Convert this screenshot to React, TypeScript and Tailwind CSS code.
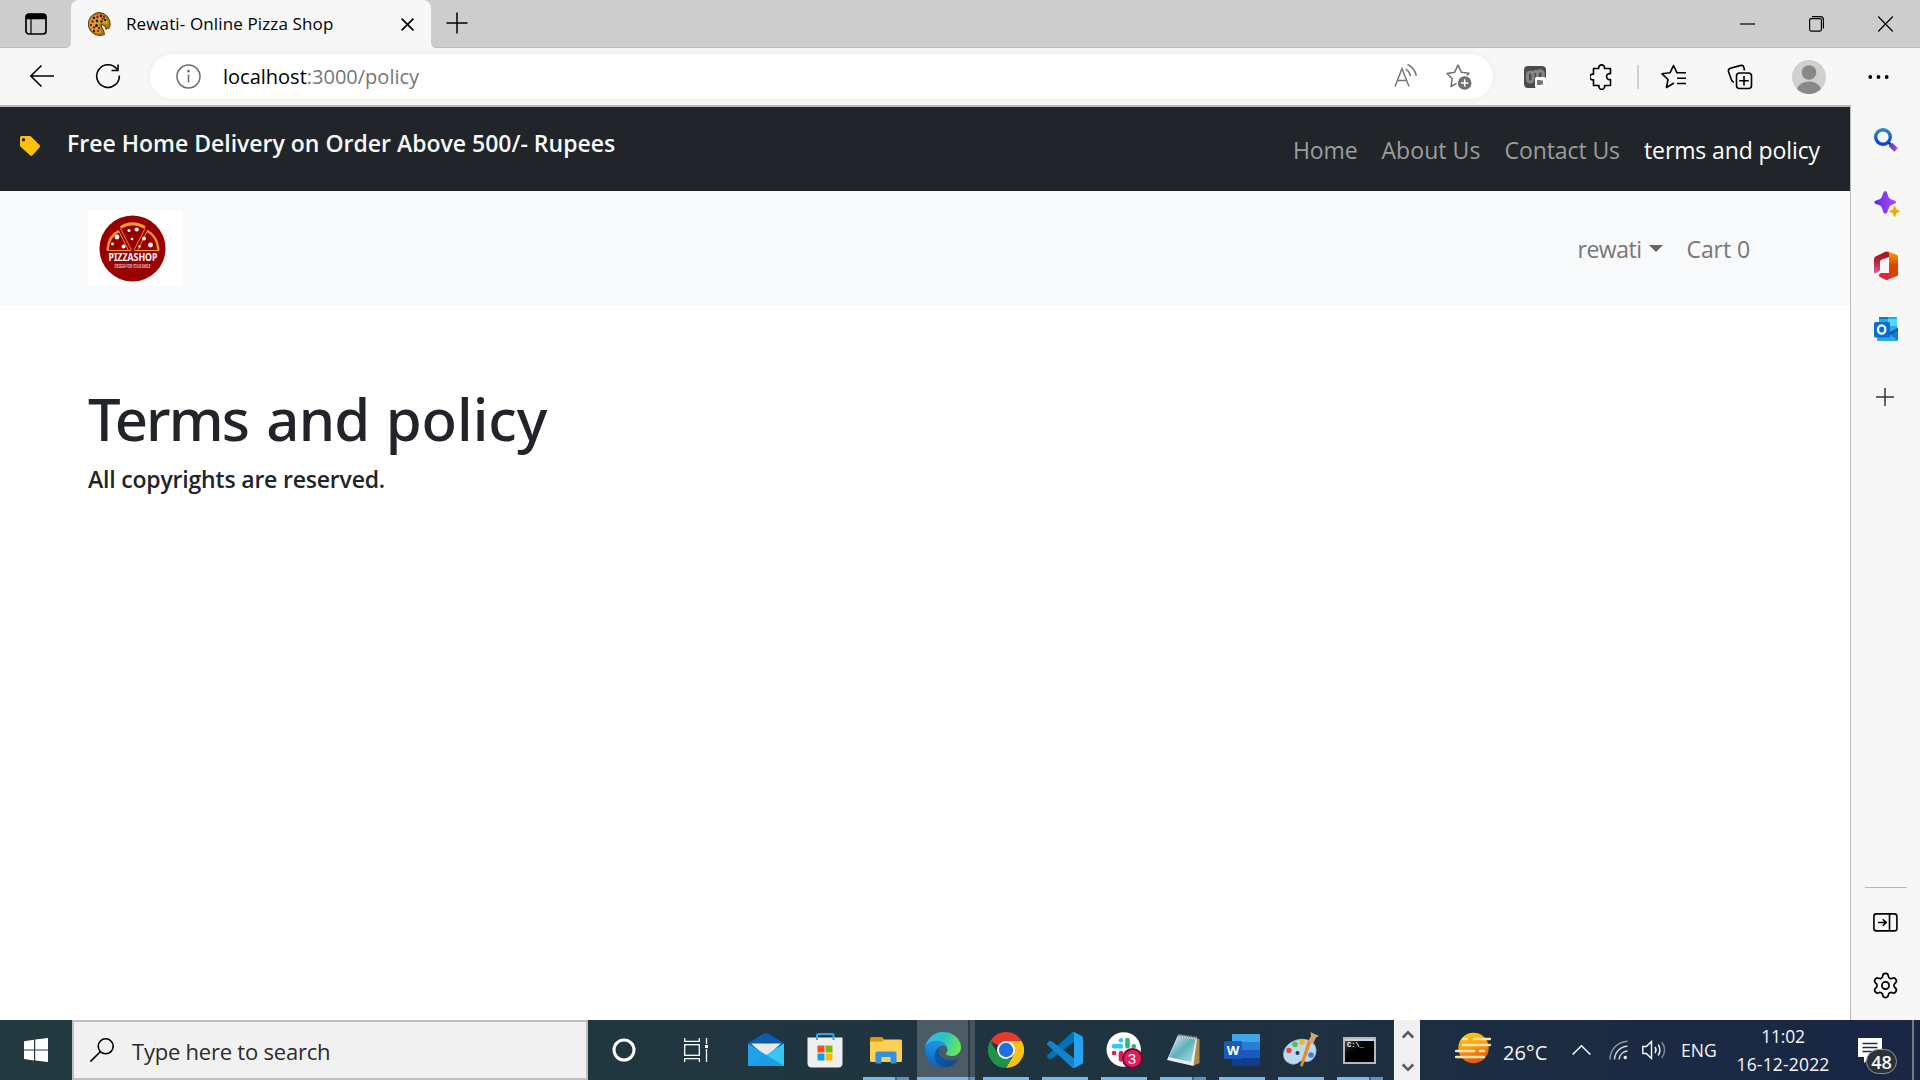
import React from "react";
import { Settings } from "lucide-react";

type Kids = { children?: React.ReactNode };

/* ---------- Browser chrome ---------- */

function Favicon() {
  return (
    <svg className="ml-4 h-6 w-6" viewBox="0 0 24 24">
      <path d="M12 0.5A11.5 11.5 0 1 0 17.5 22.500L16.500 18l-1.500-2-1-4 4 2.500 1 3 1.500-1.500 1 1 1.600-3.500A11.5 11.5 0 0 0 12 .5z" fill="#b87514" stroke="#4a2a08" strokeWidth="0.9" />
      <path d="M12 3a9 9 0 1 0 2 17.6l-1-4.6-1.500-4.500 5 0 4.500 0A9 9 0 0 0 12 3z" fill="#d9a436" />
      <g fill="#2d1b06">
        <circle cx="7" cy="6" r="1.300" /><circle cx="14" cy="4" r="1.300" /><circle cx="4" cy="13" r="1.100" />
        <circle cx="9.500" cy="13.500" r="1.500" /><circle cx="18" cy="8" r="1.300" /><circle cx="7" cy="19" r="1.200" /><circle cx="10" cy="9" r="1.400" /><circle cx="14.500" cy="9.500" r="1.200" /><circle cx="17" cy="5" r="0.900" /><circle cx="12" cy="16" r="1.100" />
      </g>
      <g fill="#b3231d">
        <circle cx="10.500" cy="5" r="1.400" /><circle cx="5.500" cy="9.500" r="1.400" /><circle cx="7" cy="15.500" r="1.400" /><circle cx="15.500" cy="6.800" r="1.200" /><circle cx="11" cy="18.800" r="1.300" />
      </g>
    </svg>
  );
}

function TabStrip() {
  return (
    <div className="flex h-12 w-full items-center bg-[#cdcdcd] shadow-[inset_0_-1px_0_#bcbcbc]">
      <svg className="ml-[25px] h-[22px] w-[22px]" viewBox="0 0 22 22" fill="none" stroke="#000" strokeWidth="1.700">
        <rect x="1" y="1" width="20" height="20" rx="3" />
        <path d="M1.500 5.500V4Q1.500 1.500 4 1.500H18Q20.500 1.500 20.500 4V5.500z" fill="#000" />
        <path d="M6 5.500V21" strokeWidth="1.200" />
      </svg>
      <svg className="ml-[18px] h-[6px] w-[6px] self-end" viewBox="0 0 6 6"><path d="M6 0V6H0Q6 6 6 0z" fill="#f7f7f7" /></svg>
      <div className="flex h-12 w-[360px] items-center rounded-t-lg bg-[#f7f7f7]">
        <Favicon />
        <span className="ml-[15px] w-[275px] whitespace-nowrap text-[17px] leading-6 tracking-[0.131px]">Rewati- Online Pizza Shop</span>
        <svg className="mt-px h-[13px] w-[13px]" viewBox="0 0 13 13" stroke="#000" strokeWidth="1.600"><path d="M.6.6 12.400 12.400M12.400.6.6 12.400" /></svg>
      </div>
      <svg className="h-[6px] w-[6px] self-end" viewBox="0 0 6 6"><path d="M0 0V6H6Q0 6 0 0z" fill="#f7f7f7" /></svg>
      <svg className="ml-[9px] h-[22px] w-[22px] -translate-y-px" viewBox="0 0 22 22" stroke="#000" strokeWidth="1.500"><path d="M11 .5V21.500M.5 11H21.500" /></svg>
      <div className="flex-1" />
      <svg className="h-4 w-[15px]" viewBox="0 0 15 16"><path d="M0 8H15" stroke="#000" strokeWidth="1.200" /></svg>
      <svg className="ml-[54px] h-4 w-[15px]" viewBox="0 0 15 16" fill="none" stroke="#000" strokeWidth="1.200">
        <rect x=".6" y="2.600" width="11.800" height="12.500" rx="1.500" />
        <path d="M3 .6H11.500Q14.400 .6 14.400 3.500V12.500" />
      </svg>
      <svg className="ml-[54px] mr-[27px] h-4 w-[15px]" viewBox="0 0 15 16" stroke="#000" strokeWidth="1.200"><path d="M.2.500 14.800 15.500M14.800.500.2 15.500" /></svg>
    </div>
  );
}

function Toolbar() {
  return (
    <div className="flex h-[57px] w-full items-center bg-[#f7f7f7]">
      <svg className="mb-[2px] ml-[29px] h-6 w-[25px]" viewBox="0 0 25 24" fill="none" stroke="#000" strokeWidth="1.600"><path d="M12.500 1.500 1.800 12 12.500 22.500M1.800 12H25" /></svg>
      <svg className="mb-px ml-[41px] h-[26px] w-[26px]" viewBox="0 0 26 26" fill="none" stroke="#000" strokeWidth="1.600">
        <path d="M22.200 6.500A11.300 11.300 0 1 0 24.300 12.500" /><path d="M23 1.500V7.500H16.500" />
      </svg>
      <div className="ml-[29px] flex h-[45px] w-[1343px] items-center rounded-full bg-white shadow-[0_0_6px_rgba(0,0,0,0.06)]">
        <svg className="ml-[26px] h-[25px] w-[25px]" viewBox="0 0 25 25" fill="none" stroke="#6b6b6b" strokeWidth="1.500">
          <circle cx="12.500" cy="12.500" r="11.500" /><path d="M12.500 10.500V18.500" /><circle cx="12.500" cy="7.200" r=".6" fill="#6b6b6b" />
        </svg>
        <div className="ml-[22px] flex-1 whitespace-nowrap text-[20px] leading-7 text-black">
          <span>localhost</span><span className="text-[#767676]">:3000/policy</span>
        </div>
        <svg className="mr-px h-[26px] w-[24px] -translate-y-px" viewBox="0 0 24 26" fill="none" stroke="#767676" strokeWidth="1.500">
          <path d="M1 23.500 8 5.500 15 23.500M3.500 17.500H12.500" />
          <path d="M11.500 5.800Q15.500 8 16.500 13.200M13.500 1.500Q20.500 4.500 22.300 12.800" />
        </svg>
        <svg className="ml-[27px] mr-[21px] h-[26px] w-[26px]" viewBox="0 0 26 26" fill="none" stroke="#6f6f6f" strokeWidth="1.500" strokeLinejoin="round">
          <path d="M10.500 19.300 5 22.500 6.200 14.800 1 9.500 8.500 8.300 12 1.200 15.500 8.300 23 9.300 21 11.500" />
          <circle cx="18.700" cy="19" r="6.800" fill="#6f6f6f" stroke="none" />
          <path d="M18.700 15.300V22.700M15 19H22.400" stroke="#fff" strokeWidth="1.600" />
        </svg>
      </div>
      <svg className="ml-[31px] h-[22px] w-[22px]" viewBox="0 0 22 22">
        <rect width="22" height="22" rx="4" fill="#4b4b4b" />
        <rect x="3.500" y="6" width="5.500" height="10" rx="2.700" fill="none" stroke="#858585" strokeWidth="3" />
        <path d="M9 6.500Q12 4 13.500 6.500V12M13.500 6Q17 3.500 19 6.500V12" fill="none" stroke="#858585" strokeWidth="3.200" />
        <rect x="11" y="11" width="11" height="11" rx="1.500" fill="#fafafa" />
        <path d="M13 14H17V15L19 14V19L17 18V19H13z" fill="#777" />
      </svg>
      <svg className="ml-[44px] h-[26px] w-[24px]" viewBox="0 0 24 26" fill="none" stroke="#000" strokeWidth="1.600" strokeLinejoin="round">
        <path d="M3.500 4.500H8.800A2.900 2.900 0 1 1 14.400 4.500H20.500V9.800A3 3 0 1 0 20.500 15.500V21.500H14.500A2.900 2.900 0 1 1 9 21.500H3.500V15.800A2.900 2.900 0 1 1 3.500 10.200z" />
      </svg>
      <div className="ml-[23px] h-6 w-[2px] bg-[#cfcfcf]" />
      <svg className="ml-[22px] h-[26px] w-[26px]" viewBox="0 0 26 26" fill="none" stroke="#000" strokeWidth="1.600" strokeLinejoin="round">
        <path d="M13 19 5.500 23.500 7 15.500 1 9.800 9 8.800 12.500 1.500 16 8.800H25M16 14.200H25M16 19.500H25" />
      </svg>
      <svg className="ml-[40px] h-[26px] w-[26px]" viewBox="0 0 26 26" fill="none" stroke="#000" strokeWidth="1.600">
        <rect x="9.500" y="9" width="15" height="15.500" rx="3" />
        <path d="M17 12V21.500M12.200 16.700H21.800" />
        <path d="M17.500 6.500 16.800 3.200Q16.200 1 14 1.400L3.300 4.200Q1 5 1.500 7.500L4.500 16Q5 17.800 7 18" />
      </svg>
      <svg className="ml-[39px] h-[34px] w-[34px]" viewBox="0 0 34 34">
        <circle cx="17" cy="17" r="17" fill="#d2d0ce" /><circle cx="17" cy="12.500" r="7.300" fill="#8a8886" />
        <path d="M5 29Q8 21.500 17 21.500T29 29A17 17 0 0 1 5 29z" fill="#8a8886" />
      </svg>
      <svg className="ml-[42px] h-1 w-[21px]" viewBox="0 0 21 4"><circle cx="2.300" cy="2" r="1.900" /><circle cx="10.500" cy="2" r="1.900" /><circle cx="18.700" cy="2" r="1.900" /></svg>
    </div>
  );
}

/* ---------- Web page ---------- */

function PizzaLogo() {
  return (
    <div className="flex h-[75px] w-[95px] items-center justify-center bg-white pr-[6px]">
      <svg className="h-[67px] w-[67px] overflow-visible" viewBox="0 0 67 67">
        <circle cx="33.500" cy="33.500" r="33" fill="#980000" />
        <g fill="none" stroke="#f2992e">
          <path d="M21.500 12.500Q33.500 5 46 12.500" strokeWidth="2.800" />
          <path d="M8.500 35Q9.500 21 20 15.800M59.500 35Q58 21 48 15.800" strokeWidth="2.400" />
          <path d="M8 35.500H32M35.500 35.500H60" strokeWidth="1.200" />
          <path d="M21.500 13.500 32.500 35M20 16.500 29.500 35.500M46 13.500 35 35M48 16.500 38.500 35.500" strokeWidth="0.900" />
        </g>
        <g fill="#fff">
          <circle cx="18" cy="22" r="2.400" /><circle cx="13.500" cy="29" r="1.400" /><circle cx="24.500" cy="31.500" r="2" />
          <circle cx="30" cy="15.500" r="1.500" /><circle cx="37.700" cy="14.500" r="2.100" /><circle cx="33" cy="24" r="1.300" />
          <circle cx="45" cy="23.500" r="1.900" /><circle cx="40.500" cy="31.500" r="1.200" /><circle cx="51.500" cy="30" r="2.400" />
          <text x="9.500" y="45.500" textLength="49" lengthAdjust="spacingAndGlyphs" fontFamily="Noto Sans" fontWeight="700" fontSize="10.500">PIZZASHOP</text>
          <text x="15.500" y="53" textLength="36" lengthAdjust="spacingAndGlyphs" fontFamily="Noto Sans" fontSize="4.600">DESIGN FOR YOUR SMILE</text>
        </g>
      </svg>
    </div>
  );
}

function Page() {
  return (
    <div className="flex flex-1 flex-col border-r border-t-2 border-[#b9b9b9] border-t-[#b9bbbc] bg-white">
      <div className="flex h-[84px] items-start bg-[#212529] text-[23px] leading-[30px]">
        <svg className="ml-5 mt-[29px] h-5 w-5" viewBox="0 0 20 20">
          <path fillRule="evenodd" d="M1.500 0H9.500Q10.600 0 11.300.7L19.500 9Q20.500 10.200 19.500 11.400L12.500 19.300Q11.300 20.500 10 19.300L.8 11Q0 10.200 0 9.200V1.500Q0 0 1.500 0zM3.500 2A1.700 1.700 0 1 0 3.500 5.400 1.700 1.700 0 0 0 3.500 2z" fill="#ffc107" />
        </svg>
        <div className="ml-[27px] mt-[21px] whitespace-nowrap font-semibold text-[#f8f9fa]">Free Home Delivery on Order Above 500/- Rupees</div>
        <div className="ml-auto mr-[30px] mt-[28px] flex gap-6 whitespace-nowrap text-[#9b9d9e]">
          <span className="tracking-[-0.129px]">Home</span>
          <span className="tracking-[0.066px]">About Us</span>
          <span className="tracking-[-0.083px]">Contact Us</span>
          <span className="tracking-[-0.108px] text-white">terms and policy</span>
        </div>
      </div>
      <div className="flex h-[114px] items-center bg-[#f8f9fb] px-[88px] text-[23px] leading-[30px] text-[#767778]">
        <PizzaLogo />
        <div className="ml-auto mr-[12px] flex items-center pt-px">
          <span className="tracking-[-0.49px]">rewati</span>
          <svg className="ml-[7px] h-[7px] w-[14px]" viewBox="0 0 14 7"><path d="M0 0H14L7 7z" fill="#666" /></svg>
          <span className="ml-6 tracking-[-0.083px]">Cart 0</span>
        </div>
      </div>
      <div className="px-[88px] pt-[78px] text-[#212529]">
        <h1 className="mb-[9px] whitespace-nowrap font-['Noto_Sans'] text-[58px] font-medium leading-[72px]">
          <span className="tracking-[-1.900px]">Terms</span>
          <span className="tracking-[-0.800px]"> <span className="ml-[4px]">and</span> </span>
          <span className="ml-[2px] tracking-[0px]">policy</span>
        </h1>
        <h5 className="text-[23px] font-semibold leading-[30px] tracking-[-0.189px]">All copyrights are reserved.</h5>
      </div>
    </div>
  );
}

/* ---------- Edge sidebar ---------- */

function Sidebar() {
  return (
    <div className="flex w-[69px] flex-col items-center bg-[#f7f7f7]">
      <svg className="mt-[23px] h-6 w-6" viewBox="0 0 24 24" fill="none">
        <defs>
          <linearGradient id="lens" x1="0" y1="0" x2="0" y2="1"><stop stopColor="#2a86c4" /><stop offset="1" stopColor="#0a3fd4" /></linearGradient>
          <linearGradient id="handle" x1="0" y1="0" x2="1" y2="1"><stop stopColor="#5a3bb5" /><stop offset="1" stopColor="#9a4bff" /></linearGradient>
        </defs>
        <circle cx="9" cy="9" r="7.300" stroke="url(#lens)" strokeWidth="3.400" />
        <path d="M16.500 16.500 22 22" stroke="url(#handle)" strokeWidth="5" />
        <path d="M14.500 14.500 16.500 16.500" stroke="#333" strokeWidth="2.500" />
      </svg>
      <svg className="ml-[2px] mt-[39px] h-[26px] w-[26px]" viewBox="0 0 26 26">
        <defs><linearGradient id="spark" x1="0" y1="0" x2="1" y2="0"><stop stopColor="#5a2be0" /><stop offset="1" stopColor="#b44cff" /></linearGradient></defs>
        <path d="M11.300 0Q13 0 13.500 3L14.500 6Q15.500 8 17.500 8.500L21 9.800Q23.500 11.300 21 12.600L17 14.200Q15.500 15 14.800 17L13.300 21Q12.800 22.800 11.300 22.800T9.300 21L8 17Q7.400 15 5.500 14.200L1.500 12.800Q-1 11.300 1.500 9.800L5.500 8.300Q7.400 7.500 8 5.500L9.300 2Q9.800 0 11.300 0z" fill="url(#spark)" />
        <path d="M20.700 15 22.200 18.800 26 20.300 22.200 21.900 20.700 26 19 21.900 15.200 20.300 19 18.800z" fill="#f2a900" stroke="#f2a900" strokeWidth=".6" />
      </svg>
      <svg className="mt-[34px] h-[29px] w-6" viewBox="0 0 24 29">
        <defs>
          <linearGradient id="offL" x1="0" y1="0" x2="0" y2="1"><stop stopColor="#a3111b" /><stop offset=".5" stopColor="#b8273a" /><stop offset="1" stopColor="#dd5fa5" /></linearGradient>
          <linearGradient id="offR" x1="0" y1="0" x2="0" y2="1"><stop stopColor="#f7a500" /><stop offset=".5" stopColor="#dd4400" /><stop offset="1" stopColor="#d83b01" /></linearGradient>
        </defs>
        <path d="M0 8Q0 6.300 1.500 5.500L12 .4 15 1.200V6L8 8.500Q6 9.300 6 11V18.500Q6 20 4.700 20.700L1.500 22.300Q0 22.800 0 21z" fill="url(#offL)" />
        <path d="M12 .4Q13 0 14.500.6L22.500 3.700Q24 4.300 24 6V23Q24 24.700 22.500 25.300L12.500 29 15 23V1.500z" fill="url(#offR)" />
        <path d="M5 23.500 7 22H15V28L12.800 29Q12 29 11 28.500L6 26Q4.500 25 5 23.500z" fill="#e3243b" />
      </svg>
      <svg className="mt-[37px] h-[24px] w-[24px]" viewBox="0 0 24 24">
        <path d="M5 0H22Q23 0 23 1V14H5z" fill="#28a8ea" /><path d="M5 0H14V2H5z" fill="#1079c4" /><path d="M14 2H23V9H14z" fill="#50d9ff" />
        <path d="M3 10H23L24 11V23Q24 24 23 24H4Q3 24 3 23z" fill="#28a8ea" /><path d="M24 11 14.500 16.500 24 23.500z" fill="#0f78d4" /><path d="M24 11V13L13 19V16.500z" fill="#123b6d" opacity=".65" />
        <rect y="5" width="16" height="15.500" rx="1.500" fill="#0a6fc9" />
        <ellipse cx="7.700" cy="12.500" rx="3.700" ry="4.200" fill="none" stroke="#fff" strokeWidth="2.200" />
      </svg>
      <svg className="mr-[2px] mt-[47px] h-[18px] w-[18px]" viewBox="0 0 18 18" stroke="#333" strokeWidth="1.500"><path d="M9 0V18M0 9H18" /></svg>
      <div className="flex-1" />
      <div className="h-px w-[42px] bg-[#b5b5b5]" />
      <svg className="mt-[25px] h-[19px] w-[25px]" viewBox="0 0 25 19" fill="none" stroke="#000" strokeWidth="1.600">
        <rect x=".9" y=".9" width="23" height="17" rx="2.500" /><path d="M16.500 1V18M5 9.500H13M9.800 6.200 13.200 9.500 9.800 12.800" />
      </svg>
      <Settings className="mb-[20px] mt-[39px]" size={29} strokeWidth={1.400} color="#000" />
    </div>
  );
}

/* ---------- Taskbar ---------- */

function Slot({ children, line }: Kids & { line?: "one" | "many" }) {
  return (
    <div className="flex h-[60px] w-[59px] flex-col items-center">
      <div className="flex h-[57px] items-center pt-[3px]">{children}</div>
      {line && (
        <div className="flex h-[3px] w-[46px]">
          <div className="flex-1 bg-[#76b9ed]" />
          {line === "many" && <div className="w-[14px] border-l-2 border-[#41698a] bg-[#5f92bd]" />}
        </div>
      )}
    </div>
  );
}

function Edge() {
  return (
    <svg className="h-9 w-9" viewBox="0 0 256 256">
      <defs>
        <linearGradient id="eD" x1="0" y1="0" x2="1" y2="0"><stop stopColor="#0c59a4" /><stop offset="1" stopColor="#114a8b" /></linearGradient>
        <linearGradient id="eB" x1=".6" y1="0" x2=".3" y2="1"><stop stopColor="#1b9de2" /><stop offset=".5" stopColor="#1383d8" /><stop offset="1" stopColor="#0a5bb8" /></linearGradient>
        <linearGradient id="eG" x1="0" y1=".3" x2="1" y2=".6"><stop stopColor="#35b4ee" /><stop offset=".45" stopColor="#2dc3c7" /><stop offset="1" stopColor="#66eb50" /></linearGradient>
      </defs>
      <path fill="url(#eD)" d="M231 190.500c-3.400 1.800-6.900 3.400-10.500 4.700a101.500 101.500 0 0 1-35.900 6.400c-47.300 0-88.500-32.500-88.500-74.300a31.500 31.500 0 0 1 16.400-27.300c-42.800 1.800-53.800 46.400-53.800 72.500 0 74 68.100 81.400 82.800 81.400 7.900 0 19.800-2.300 27-4.600l1.300-.4a128.300 128.300 0 0 0 66.600-52.800 4 4 0 0 0-5.400-5.600z" />
      <path fill="url(#eB)" d="M105.700 241.400a79.200 79.200 0 0 1-22.700-21.300 80.700 80.700 0 0 1 29.500-120c3.200-1.500 8.500-4.100 15.600-4a32.400 32.400 0 0 1 25.700 13 31.900 31.900 0 0 1 6.300 18.700c0-.2 24.500-79.600-80-79.600-43.900 0-80 41.600-80 78.200a130.200 130.200 0 0 0 12.100 56 128 128 0 0 0 156.400 67 75.500 75.500 0 0 1-62.800-8z" />
      <path fill="url(#eG)" d="M152.300 148.900c-.9 1-3.400 2.500-3.400 5.600 0 2.600 1.700 5.200 4.800 7.300 14.300 10 41.400 8.600 41.500 8.600a59.600 59.600 0 0 0 30.300-8.300 61.400 61.400 0 0 0 30.400-52.900c.3-22.400-8-37.300-11.300-43.900C223.500 23.900 177.700 0 128 0A128 128 0 0 0 0 126.200c.5-36.500 36.800-66 80-66 3.500 0 23.500.3 42 10a72.600 72.600 0 0 1 30.900 29.300c6.100 10.600 7.200 24.100 7.200 29.500s-2.700 13.300-7.800 19.900z" />
    </svg>
  );
}

function PinnedApps() {
  return (
    <div className="flex h-[60px] items-start">
      <div className="flex h-[60px] w-[71px] items-center justify-center">
        <svg className="h-6 w-6" viewBox="0 0 24 24"><circle cx="12" cy="12" r="10" fill="none" stroke="#fff" strokeWidth="3" /></svg>
      </div>
      <div className="flex h-[60px] w-[77px] items-center pl-[25px]">
        <svg className="h-6 w-6" viewBox="0 0 24 24" fill="none" stroke="#fff" strokeWidth="1.300">
          <path d="M.7 0V3.300H15.300V0M.7 24V20.700H15.300V24M22.500 0V6M22.500 11V24" /><rect x=".7" y="6.700" width="14.600" height="10.600" /><rect x="21" y="7" width="3" height="3" fill="#fff" stroke="none" />
        </svg>
      </div>
      <Slot>
        <svg className="h-9 w-9" viewBox="0 0 36 36">
          <path d="M0 11 16 1.500Q18 .5 20 1.500L36 11V20H0z" fill="#0a5cb0" /><path d="M3 11.500H33L18 25z" fill="#e9e9e9" />
          <path d="M0 11.500 36 34H0z" fill="#1ea2ea" /><path d="M36 11.500 18 23 35 34H36z" fill="#35c6f4" /><path d="M0 34H36L18 23z" fill="#1f9be4" />
        </svg>
      </Slot>
      <Slot>
        <svg className="h-9 w-9" viewBox="0 0 36 36">
          <path d="M10 7V3.500Q10 2 11.500 2H25Q26.500 2 26.500 3.500V7" fill="none" stroke="#26a9ea" strokeWidth="2" />
          <path d="M.5 5.500H35.500V31Q35.500 35.500 31 35.500H5Q.5 35.500 .5 31z" fill="#efefef" /><path d="M10 5.500V8M26.500 5.500V8" stroke="#26a9ea" strokeWidth="2" />
          <path d="M10.500 13.500H17.500V20.500H10.500z" fill="#f25022" /><path d="M18.500 13.500H25.500V20.500H18.500z" fill="#7fba00" /><path d="M10.500 21.500H17.500V28.500H10.500z" fill="#00a4ef" /><path d="M18.500 21.500H25.500V28.500H18.500z" fill="#ffb900" />
        </svg>
      </Slot>
      <div className="w-[2px]" />
      <Slot line="many">
        <svg className="h-[27px] w-8" viewBox="0 0 32 27">
          <path d="M0 1.500Q0 0 1.500 0H12L15 3V8H0z" fill="#d99a06" /><path d="M0 4.500H12L15 2.500H30.500Q32 2.500 32 4V23.500Q32 25 30.500 25H1.500Q0 25 0 23.500z" fill="#fccf55" />
          <path d="M5.500 26.500V16.500Q5.500 14.500 7.500 14.500H24.500Q26.500 14.500 26.500 16.500V26.500H20.500V20H11.500V26.500z" fill="#3290dd" />
        </svg>
      </Slot>
      <div className="ml-[2px] flex h-[60px] w-[58px]">
        <div className="flex w-[51px] flex-col bg-[#4b5c66]">
          <div className="flex h-[57px] items-center justify-center pt-[3px]"><Edge /></div>
          <div className="h-[3px] bg-[#76b9ed]" />
        </div>
        <div className="flex w-[2px] flex-col justify-end bg-[#2b3943]"><div className="h-[3px] bg-[#4a7ea6]" /></div>
        <div className="flex w-[5px] flex-col justify-end bg-[#44545f]"><div className="h-[3px] bg-[#5f92bd]" /></div>
      </div>
      <div className="w-px" />
      <Slot line="one">
        <svg className="h-9 w-9" viewBox="0 0 36 36">
          <path d="M18 18 2.400 9A18 18 0 0 1 33.600 9z" fill="#e33b2e" /><path d="M18 18V9H33.600A18 18 0 0 1 18 36L25.800 22.500z" fill="#fbc116" />
          <path d="M2.400 9 10.200 22.500 18 27H23.200L18 36A18 18 0 0 1 2.400 9z" fill="#1f9347" />
          <circle cx="18" cy="18" r="9" fill="#fff" /><circle cx="18" cy="18" r="7.200" fill="#1f6fe5" />
        </svg>
      </Slot>
      <Slot line="one">
        <svg className="h-9 w-9" viewBox="0 0 100 100">
          <path fill="#0072ba" d="M96.500 10.800 75.900.9a6.200 6.200 0 0 0-7.100 1.200L1.300 63.600a4.200 4.200 0 0 0 0 6.200l5.500 5a4.200 4.200 0 0 0 5.300.2L93.400 13.400C96 11.300 100 13.200 100 16.700a6.300 6.300 0 0 0-3.500-5.900z" />
          <path fill="#0f83d0" d="M96.500 89.200 75.900 99.100a6.200 6.200 0 0 1-7.100-1.200L1.300 36.400a4.200 4.200 0 0 1 0-6.200l5.500-5a4.200 4.200 0 0 1 5.300-.2L93.400 86.600C96 88.700 100 86.800 100 83.300a6.300 6.300 0 0 1-3.500 5.900z" />
          <path fill="#25a3f2" d="M75.900 99.100a6.200 6.200 0 0 1-7.100-1.200c2.300 2.300 6.200.7 6.200-2.600V4.700c0-3.300-3.900-4.900-6.200-2.600a6.200 6.200 0 0 1 7.100-1.200l20.600 9.900a6.300 6.300 0 0 1 3.500 5.600v67.200a6.300 6.300 0 0 1-3.500 5.600z" />
        </svg>
      </Slot>
      <Slot line="one">
        <div className="relative">
          <svg className="h-9 w-9" viewBox="0 0 36 36">
            <circle cx="17.700" cy="17.500" r="17.200" fill="#fff" />
            <g strokeWidth="4.600" strokeLinecap="round" fill="none">
              <path d="M8 14.300H15" stroke="#36c5f0" /><path d="M15 8.200V8.300" stroke="#36c5f0" />
              <path d="M21.500 8V14.300" stroke="#2eb67d" /><path d="M27.700 14.300H27.800" stroke="#2eb67d" />
              <path d="M15 21V27.500" stroke="#e01e5a" /><path d="M8 21H8.100" stroke="#e01e5a" />
              <path d="M21.500 21H28" stroke="#ecb22e" />
            </g>
          </svg>
          <div className="absolute left-[16px] top-[16px] flex h-[21px] w-[21px] items-center justify-center rounded-full border-2 border-[#6f0b30] bg-[#e01e5a] font-['Liberation_Sans'] text-[15px] leading-none text-white">3</div>
        </div>
      </Slot>
      <Slot line="many">
        <svg className="h-[34px] w-[34px]" viewBox="0 0 34 34">
          <defs><linearGradient id="np" x1="0" y1="0" x2="1" y2="1"><stop stopColor="#d5eff2" /><stop offset=".5" stopColor="#5fb0ba" /><stop offset="1" stopColor="#b4dfe4" /></linearGradient></defs>
          <path d="M30 5 33.500 6V30L27 33z" fill="#a98a4c" /><path d="M12 2 31 5 27.500 33 1 27z" fill="#e8eef0" /><path d="M12 4 29.500 6.500 25 29 2.500 24z" fill="url(#np)" />
          <path d="M12 2.500 31 5" stroke="#8f9698" strokeWidth="3" strokeDasharray="1.500 1" />
        </svg>
      </Slot>
      <Slot line="one">
        <svg className="h-8 w-9" viewBox="0 0 36 32">
          <path d="M8 1Q8 0 9 0H35Q36 0 36 1V8H8z" fill="#41a5ee" /><path d="M8 8H36V16H8z" fill="#2b7cd3" /><path d="M8 16H36V24H8z" fill="#185abd" /><path d="M8 24H36V31Q36 32 35 32H9Q8 32 8 31z" fill="#103f91" />
          <rect y="7" width="18" height="18" rx="1.500" fill="#185abd" />
          <text x="9" y="20.800" textAnchor="middle" fill="#fff" fontFamily="Open Sans" fontWeight="700" fontSize="13">W</text>
        </svg>
      </Slot>
      <Slot line="one">
        <svg className="h-9 w-9" viewBox="0 0 36 36">
          <path d="M16 7.500C27 6 34 12 33 20S25 31 21 29C17 27 17 31 12 32S0 29 .5 22 7 9 16 7.500z" fill="#b9d9ef" stroke="#8fb6d3" strokeWidth=".8" />
          <circle cx="14.500" cy="21" r="2" fill="#243744" />
          <circle cx="6" cy="18.500" r="2.700" fill="#e04b3a" /><circle cx="12" cy="12.500" r="2.800" fill="#67b54b" /><circle cx="19" cy="10" r="2.900" fill="#f6b521" /><circle cx="28" cy="23" r="2.800" fill="#3d7fd0" />
          <path d="M29 8 19.500 35 17 33.500 25 8z" fill="#e58a2b" /><path d="M25 9.500 30.500 11 33 5.500 36 4 27.500 0 28 4z" fill="#d0a374" />
        </svg>
      </Slot>
      <Slot line="many">
        <div className="flex h-[27px] w-[33px] flex-col border-2 border-[#b7babd] bg-black">
          <div className="h-[2px] bg-[#c3d3e2]" />
          <div className="flex-1 bg-linear-to-br from-[#4a4a4a] via-black to-black pl-[2px] font-['Liberation_Mono'] text-[7px] font-bold leading-[8px] text-white">C:\_</div>
        </div>
      </Slot>
    </div>
  );
}

function Tray() {
  return (
    <div className="flex h-[60px] flex-1 items-center text-[#f5f7f9]">
      <svg className="ml-[35px] h-[34px] w-9 -translate-y-[2px]" viewBox="0 0 36 34">
        <defs><linearGradient id="sun" x1="0" y1="0" x2=".3" y2="1"><stop stopColor="#ffd400" /><stop offset=".5" stopColor="#f9a21b" /><stop offset="1" stopColor="#ea5a0c" /></linearGradient></defs>
        <circle cx="18.500" cy="17" r="15.200" fill="url(#sun)" />
        <g stroke="#fbe3a5" strokeWidth="2.400" strokeLinecap="round"><path d="M8 8H12M19 8H35M8 14H35M1 20H19M25 20H29M1 26H29" /></g>
      </svg>
      <span className="ml-[12px] mt-[5px] w-[45px] whitespace-nowrap text-[20px] leading-7 tracking-[0.1px]">26°C</span>
      <svg className="ml-[24px] h-[10px] w-[19px]" viewBox="0 0 19 10" fill="none" stroke="#fff" strokeWidth="1.500"><path d="M.6 9.500 9.500 .8 18.400 9.500" /></svg>
      <svg className="ml-[18px] h-[20px] w-[19px]" viewBox="0 0 19 20" fill="none" strokeWidth="1.400" stroke="#d5dade">
        <path d="M1 19.500A18.300 18.300 0 0 1 18.500 1.200" stroke="#8f9aa5" /><path d="M5.500 19.500A13.500 13.500 0 0 1 18.500 6.300M10 19.500A9 9 0 0 1 18.500 11" /><circle cx="16.300" cy="17.500" r="1.700" fill="#fff" stroke="none" />
      </svg>
      <svg className="ml-[14px] h-5 w-6" viewBox="0 0 24 20" fill="none" stroke="#fff" strokeWidth="1.400">
        <path d="M.8 6.500H4.300L9.500 1.500V18.500L4.300 13.500H.8z" /><path d="M13 7Q15 10 13 13M16.300 4.500Q19.500 10 16.300 15.500" /><path d="M19.700 2Q25.500 10 19.700 18" stroke="#7e8a98" />
      </svg>
      <span className="ml-[15px] w-[36px] text-[17.5px] leading-6">ENG</span>
      <div className="ml-[19px] flex w-[94px] flex-col items-center whitespace-nowrap text-[17.5px] leading-[28px]">
        <span className="tracking-[-0.225px]">11:02</span>
        <span className="tracking-[0.169px]">16-12-2022</span>
      </div>
      <div className="relative ml-[28px] h-9 w-10">
        <svg className="h-9 w-6" viewBox="0 0 24 36"><path d="M0 6H24V25H12L6 31V25H0z" fill="#fff" /><path d="M4.500 11.500H19.500M4.500 15.500H19.500M4.500 19.500H14" stroke="#1c2c42" strokeWidth="1.300" /></svg>
        <div className="absolute left-2 top-[17px] flex h-[25px] w-[31px] items-center justify-center rounded-full border-[1.500px] border-[#8e959c] bg-[#2c3238] text-[18px] font-semibold leading-none text-white">48</div>
      </div>
      <div className="ml-[14px] h-[60px] w-[2px] bg-[#727d8a]" />
    </div>
  );
}

function Taskbar() {
  return (
    <div className="flex h-[60px] w-full bg-linear-to-r from-[#22393f] via-[#20343f] via-55% to-[#1a2744] to-95%">
      <div className="flex w-[72px] items-center pl-6">
        <svg className="h-[24px] w-6" viewBox="0 0 24 24" fill="#fff"><path d="M0 3.200 10 1.700V11.500H0zM11.200 1.500 24 0V11.500H11.200zM0 12.600H10V22.400L0 20.900zM11.200 12.600H24V24L11.200 22.500z" /></svg>
      </div>
      <div className="flex h-[60px] w-[516px] items-center border-2 border-[#bfbfbf] bg-[#f1f1f1]">
        <svg className="ml-4 h-6 w-6" viewBox="0 0 24 24" fill="none" stroke="#000" strokeWidth="1.600"><circle cx="15.700" cy="8.300" r="7.500" /><path d="M10.300 13.700 .4 23.600" /></svg>
        <span className="ml-[18px] mt-px whitespace-nowrap text-[22px] leading-[30px] tracking-[-0.220px] text-[#2b2b2b]">Type here to search</span>
      </div>
      <PinnedApps />
      <div className="ml-[5px] flex h-[60px] w-[26px] flex-col items-center justify-between border-l border-white bg-[#f0f0f0] pb-[8px] pt-[10px]">
        <svg className="h-[9px] w-3" viewBox="0 0 12 9" fill="none" stroke="#555" strokeWidth="2.500"><path d="M.8 7.500 6 2.200 11.200 7.500" /></svg>
        <svg className="h-[9px] w-3" viewBox="0 0 12 9" fill="none" stroke="#555" strokeWidth="2.500"><path d="M.8 1.500 6 6.800 11.200 1.500" /></svg>
      </div>
      <Tray />
    </div>
  );
}

export default function App() {
  return (
    <div className="flex h-[1080px] w-[1920px] flex-col overflow-hidden bg-[#f7f7f7] font-['Open_Sans',sans-serif] text-black">
      <TabStrip />
      <Toolbar />
      <div className="flex h-[915px]">
        <Page />
        <Sidebar />
      </div>
      <Taskbar />
    </div>
  );
}
